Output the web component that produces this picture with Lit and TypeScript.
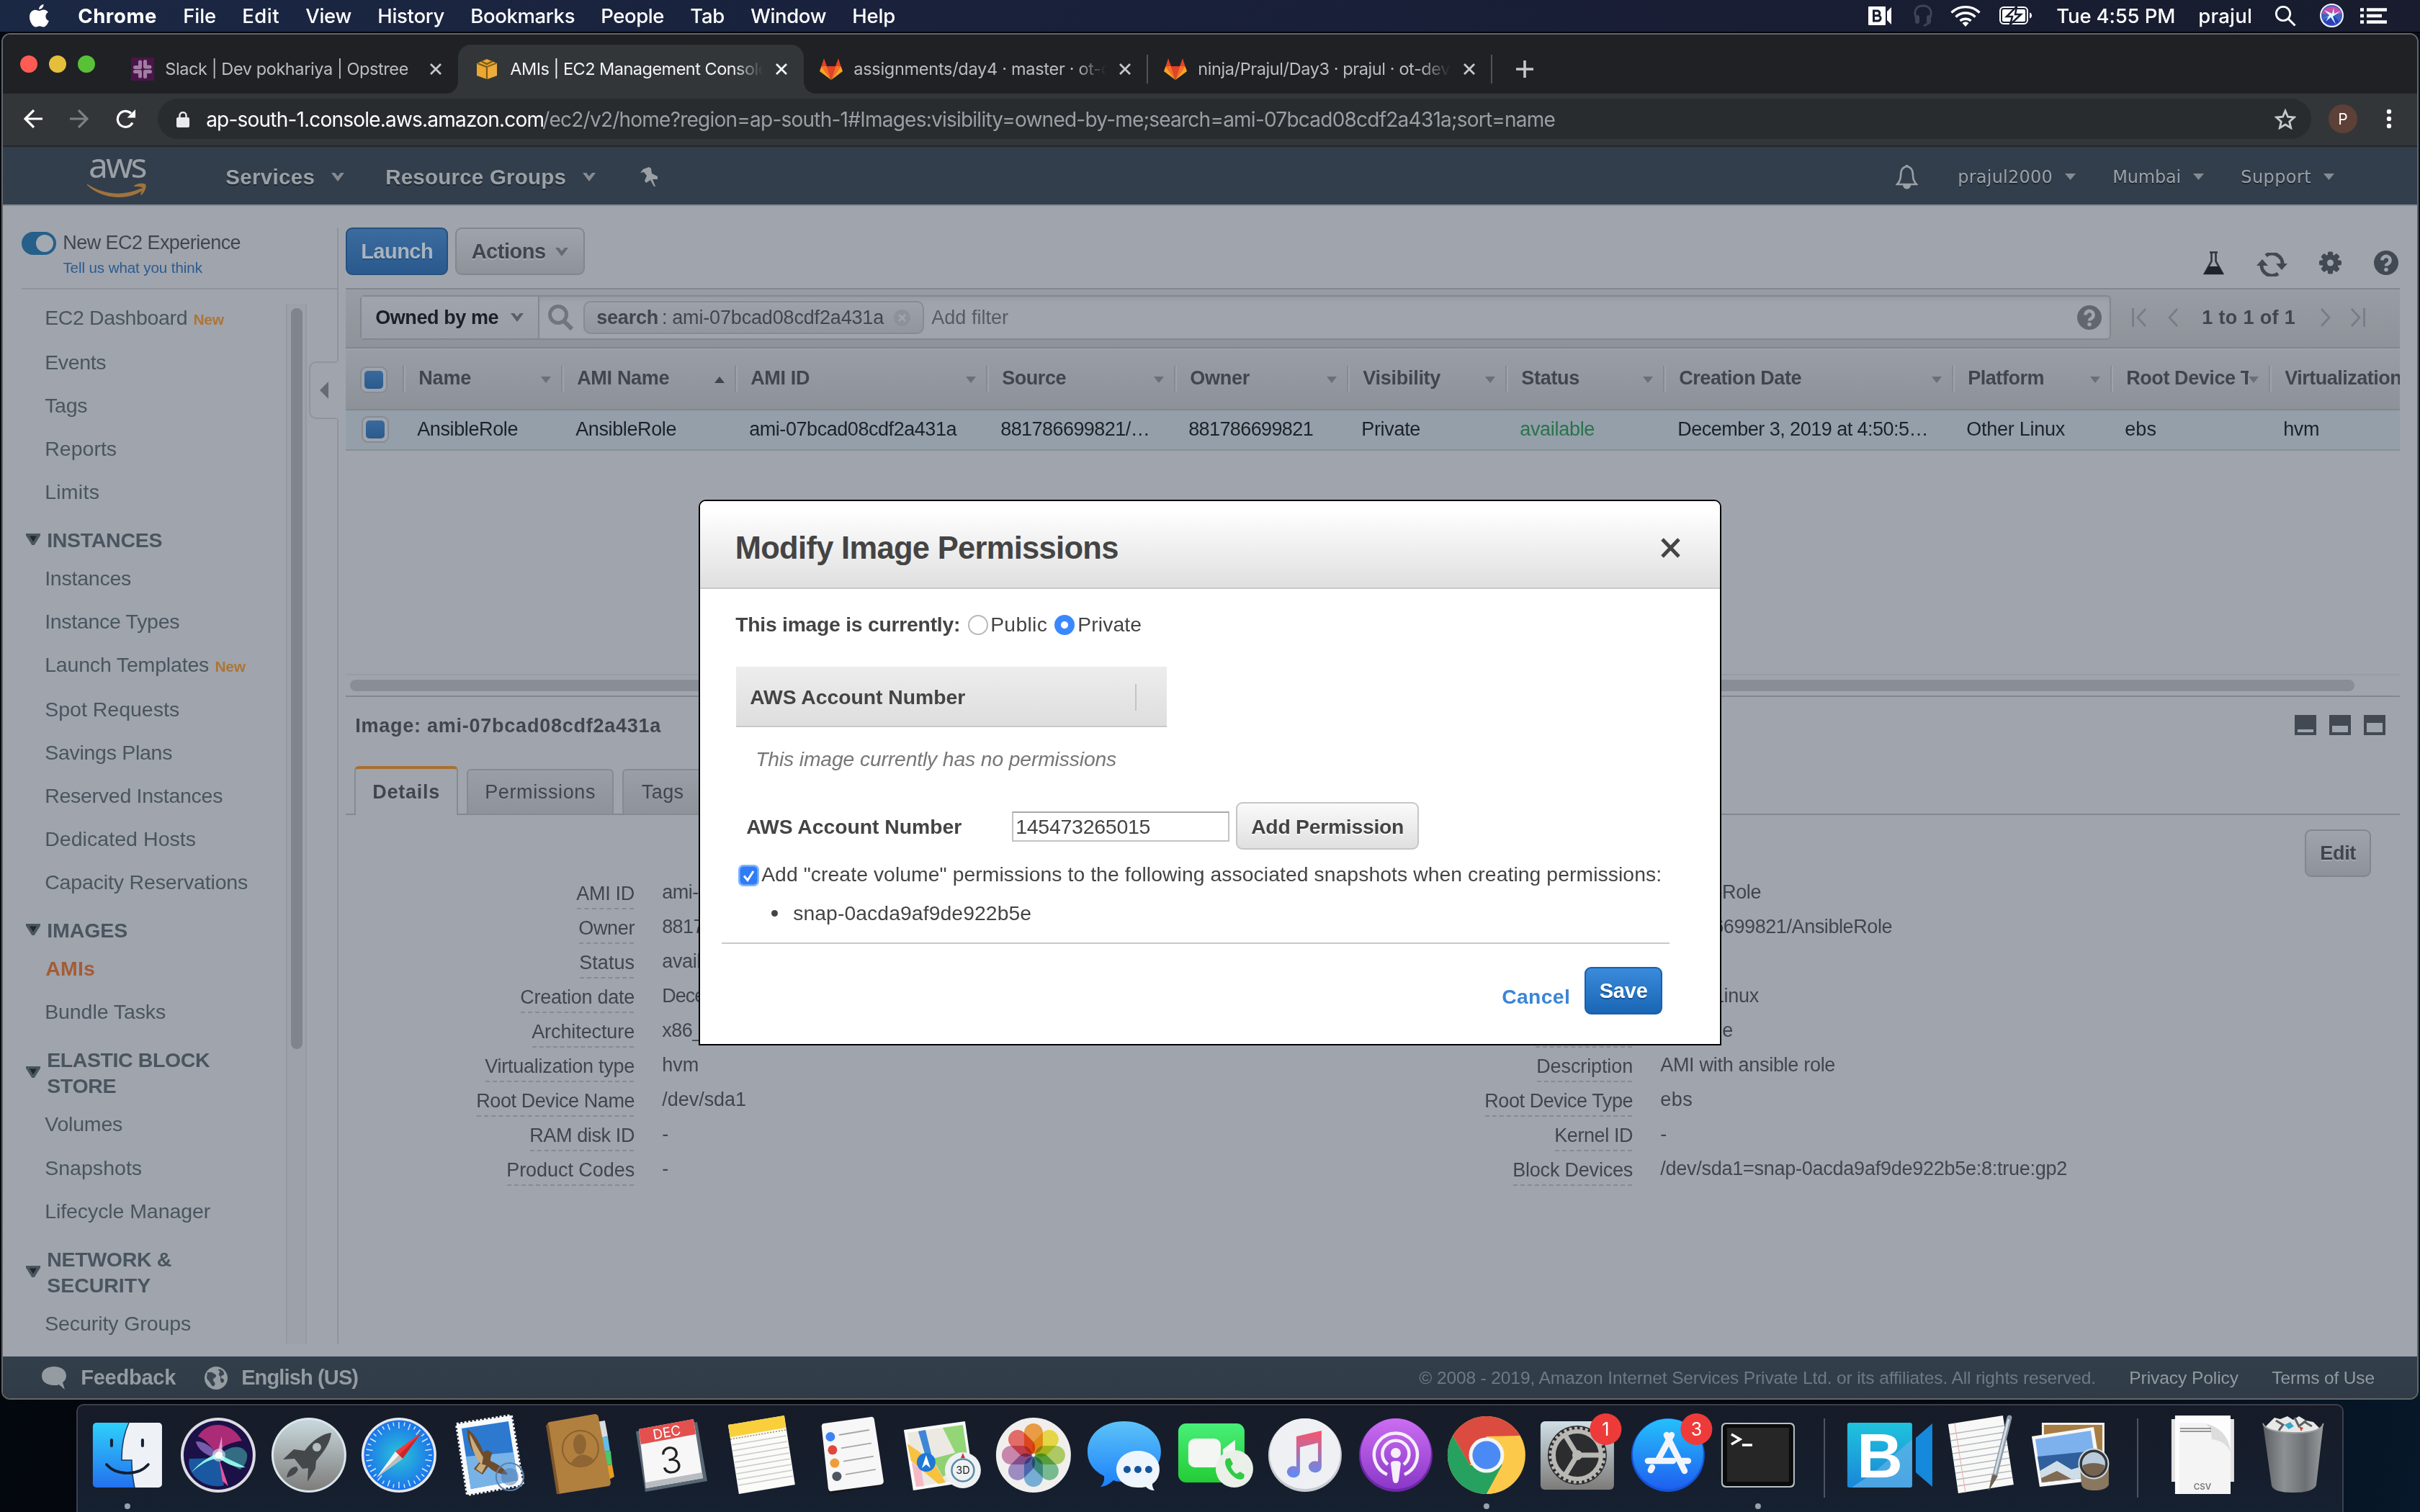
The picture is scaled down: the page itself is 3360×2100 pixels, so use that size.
import { LitElement, html, svg, css, nothing, SVGTemplateResult } from "lit";
import { customElement, property } from "lit/decorators.js";

/** A line of text tracked so that it fills exactly `w` pixels. */
@customElement("fit-text")
class FitText extends LitElement {
  @property() text = "";
  @property({ type: Number }) w = 0;

  static styles = css`
    :host { display: inline-block; white-space: pre; flex: none; }
    .run { display: inline-block; margin-left: -0.03em; }
  `;

  updated() {
    const run = this.renderRoot.querySelector(".run") as HTMLElement;
    const size = parseFloat(getComputedStyle(run).fontSize);
    run.style.letterSpacing = "0px";
    const natural = run.getBoundingClientRect().width;
    run.style.letterSpacing = `${(this.w + size * 0.07 - natural) / this.text.length}px`;
    this.style.width = `${this.w}px`;
  }

  render() {
    return html`<span class="run">${this.text}</span>`;
  }
}

const fit = (text: string, w: number) => html`<fit-text .text=${text} .w=${w}></fit-text>`;

const icon = (cls: string, w: number, h: number, body: SVGTemplateResult) =>
  html`<svg class="ic ${cls}" width=${w} height=${h} viewBox="0 0 ${w} ${h}" fill="none">${body}</svg>`;

const poly = (points: string, fill: string) => svg`<polygon points=${points} fill=${fill} />`;

/* ---------- menu bar ---------- */

const MENUS: [string, number][] = [
  ["File", 44], ["Edit", 50], ["View", 62], ["History", 91], ["Bookmarks", 143],
  ["People", 86], ["Tab", 46], ["Window", 103], ["Help", 58],
];

@customElement("menu-bar")
class MenuBar extends LitElement {
  static styles = css`
    :host { display: block; }
    .bar {
      display: flex; align-items: center; box-sizing: border-box; height: 46px; padding: 0 46px 1px 41px;
      font: 500 27.5px Inter, sans-serif; color: #fff; border-bottom: 2px solid #03060f;
      background: linear-gradient(90deg, #1b2844, #19203a 45%, #181c2e);
    }
    .ic { flex: none; }
    .app { font-weight: 700; margin-left: 41px; }
    .menus { display: flex; gap: 38px; margin-left: 38px; }
    .fill { flex: 1; }
    .head { margin-left: 30px; } .wifi { margin-left: 24px; } .bat { margin-left: 26px; }
    .clock { margin-left: 34px; } .user { margin-left: 34px; } .find { margin-left: 32px; }
    .siri { margin-left: 33px; } .list { margin-left: 23px; }
  `;
  render() {
    return html`<div class="bar">
      ${icon("apple", 27, 32, svg`<path fill="#fff" d="M19.5 0c.3 3.300-2.900 7.200-6.300 7-.4-3.200 2.900-6.700 6.300-7zM13.600 9c1.600 0 3.400-1.500 6-1.500 2.500 0 4.900 1.300 6.200 3.400-5 3-4.300 9.900 1 12.100C25.400 27 22.500 31.500 19.400 31.500c-2 0-2.900-1.300-5.400-1.300s-3.500 1.300-5.400 1.300C4.800 31.500 0 24.300 0 17.700 0 11.500 3.800 7.700 8 7.700c2.400 0 4 1.300 5.600 1.300z"/>`)}
      <span class="app">${fit("Chrome", 108)}</span>
      <div class="menus">${MENUS.map(([t, w]) => fit(t, w))}</div>
      <div class="fill"></div>
      ${icon("bj", 32, 26, svg`<rect width="24" height="26" rx="1" fill="#fff"/><path d="M32 1v24l-6-6V7z" fill="#fff"/><path d="M7.500 6h5a3.300 3.300 0 0 1 0 6.700h-5zm0 6.700h6a3.600 3.600 0 0 1 0 7.300h-6z" stroke="#181c2e" stroke-width="3"/>`)}
      ${icon("head", 28, 32, svg`<path d="M4 18C0 7 7 2 14 2s14 5 10 16" stroke="#3f4358" stroke-width="3"/><rect x="3" y="15" width="6" height="12" rx="3" fill="#3f4358"/><rect x="19" y="15" width="6" height="12" rx="3" fill="#3f4358"/><path d="M22 26l-7 4" stroke="#3f4358" stroke-width="3"/>`)}
      ${icon("wifi", 42, 30, svg`<g stroke="#fff" stroke-width="3.400"><path d="M1.500 10.500a28 28 0 0 1 39 0"/><path d="M7.500 16.500a19.500 19.500 0 0 1 27 0"/><path d="M13.500 22a11.500 11.500 0 0 1 15 0"/></g><path d="M16.500 25a7 7 0 0 1 9 0L21 30z" fill="#fff"/>`)}
      ${icon("bat", 46, 25, svg`<rect x="1" y="1" width="38" height="23" rx="5" stroke="#fff" stroke-width="2"/><rect x="4" y="4" width="32" height="17" rx="2" fill="#fff"/><path d="M24 0L10 14h8l-3 11 15-14h-8z" fill="#fff" stroke="#181c2e" stroke-width="2.500"/><path d="M42 8.500c4 1 4 7 0 8z" fill="#fff"/>`)}
      <span class="clock">${fit("Tue 4:55 PM", 163)}</span>
      <span class="user">${fit("prajul", 73)}</span>
      ${icon("find", 30, 30, svg`<circle cx="12" cy="12" r="9.700" stroke="#fff" stroke-width="2.800"/><path d="M19 19l9.500 9.500" stroke="#fff" stroke-width="3"/>`)}
      ${icon("siri", 33, 33, svg`<circle cx="16.500" cy="16.500" r="15.500" fill="#3b62c4" stroke="#f4f4ff" stroke-width="2"/><path d="M3 14A14 14 0 0 1 30 14L16.500 16z" fill="#c24fa9"/><path d="M5 24A14 14 0 0 0 27 25L17 15z" fill="#2a3fb5"/><path d="M4 21l25-11-11 8 4 11-7-10-7 6 5-9-7-7 11 5 2-8 1 9z" fill="#d7ffff"/>`)}
      ${icon("list", 37, 22, svg`<path d="M0 2.500h5M9 2.500h28M0 11h5M9 11h21M0 19.500h5M9 19.500h28" stroke="#fff" stroke-width="4.400"/>`)}
    </div>`;
  }
}

/* ---------- browser chrome ---------- */

const slackIcon = icon("fav", 32, 32, svg`<rect width="32" height="32" fill="#4a154b"/><g stroke="#a07ea3" stroke-width="5" stroke-linecap="round"><path d="M12.500 6v6M5.500 13.500h7M19.500 5.500v7M20 13h6M5.500 19.500h7M12.500 20v6M19.500 19.500h7M19.500 20v6.500"/></g>`);
const cubeIcon = icon("fav cube", 28, 28, svg`<path d="M0 6L14 0l14 6v17l-14 5-14-5z" fill="#eba72f"/><path d="M6 3l8 4 8-4M1 6l13 5 13-5M14 11v17" stroke="#7a5a17" stroke-width="2.200"/><path d="M15 11l13-5v17l-13 5z" fill="#f0b043" opacity=".5"/>`);
const foxIcon = icon("fav", 32, 30, svg`
  ${poly("6,0 10,11 2.500,11", "#e24329")}${poly("26,0 29.500,11 22,11", "#e24329")}
  ${poly("10,11 22,11 16,30", "#e24329")}${poly("2.500,11 10,11 16,30", "#fc6d26")}${poly("29.500,11 22,11 16,30", "#fc6d26")}
  ${poly("2.500,11 0,18 16,30", "#fca326")}${poly("29.500,11 32,18 16,30", "#fca326")}`);

const cross = (color: string) => icon("x", 16, 16, svg`<path d="M1 1l14 14M15 1L1 15" stroke=${color} stroke-width="2.800"/>`);

@customElement("browser-chrome")
class BrowserChrome extends LitElement {
  static styles = css`
    :host { display: block; font-family: Inter, sans-serif; }
    .ic { flex: none; display: block; }
    .strip { display: flex; box-sizing: border-box; height: 82px; padding-top: 14px; background: #202124; }
    .lights { display: flex; box-sizing: border-box; gap: 16px; padding: 15px 0 0 24px; width: 148px; }
    .light { width: 24px; height: 24px; border-radius: 50%; }
    .red { background: #ff5b54; } .yellow { background: #e5be3b; } .green { background: #58c138; }
    .tab { display: flex; align-items: center; box-sizing: border-box; height: 68px; font-size: 23.500px; color: #babdc1; }
    .first { width: 484px; padding-left: 30px; }
    .active { width: 480px; padding-left: 26px; background: #323639; border-radius: 18px 18px 0 0; color: #f1f3f4; position: relative; }
    .active::before, .active::after { content: ""; position: absolute; bottom: 0; width: 16px; height: 16px; }
    .active::before { left: -16px; background: radial-gradient(circle at 0 0, transparent 15.500px, #323639 16px); }
    .active::after { right: -16px; background: radial-gradient(circle at 100% 0, transparent 15.500px, #323639 16px); }
    .third, .fourth { width: 478px; padding-left: 22px; }
    .title { margin-left: 16px; overflow: hidden; white-space: nowrap; height: 32px; line-height: 32px; }
    .active .title { margin-left: 19px; }
    .faded { width: 350px; -webkit-mask-image: linear-gradient(90deg, #000 88%, transparent 100%); mask-image: linear-gradient(90deg, #000 88%, transparent 100%); }
    .x { margin-left: 18px; }
    .first .x { margin-left: 31px; }
    .rule { width: 2px; height: 40px; background: #515356; margin-left: auto; }
    .plus { margin: 21px 0 0 32px; }
    .toolbar { display: flex; align-items: center; box-sizing: border-box; height: 74px; padding: 0 0 2px 29px; background: #323639; border-bottom: 2px solid #232729; }
    .fwd { margin-left: 38px; } .reload { margin-left: 38px; }
    .omni { display: flex; align-items: center; box-sizing: border-box; width: 2990px; height: 56px; margin-left: 30px; padding: 1px 21px 0 26px; border-radius: 28px; background: #282c2f; font-size: 28px; color: #9aa0a6; }
    .host { margin-left: 24px; color: #fff; }
    .star { margin-left: auto; }
    .avatar { display: grid; place-items: center; width: 40px; height: 40px; border-radius: 50%; margin-left: 24px; background: #5d4037; color: #fff; font-size: 21px; }
    .dots { margin-left: 40px; }
  `;
  render() {
    return html`
      <div class="strip">
        <div class="lights"><i class="light red"></i><i class="light yellow"></i><i class="light green"></i></div>
        <div class="tab first">${slackIcon}<div class="title">${fit("Slack | Dev pokhariya | Opstree", 336)}</div>${cross("#c6c9cc")}</div>
        <div class="tab active">${cubeIcon}<div class="title faded">${fit("AMIs | EC2 Management Console", 356)}</div>${cross("#f1f3f4")}</div>
        <div class="tab third">${foxIcon}<div class="title faded">${fit("assignments/day4 · master · ot-d", 356)}</div>${cross("#c6c9cc")}<i class="rule"></i></div>
        <div class="tab fourth">${foxIcon}<div class="title faded">${fit("ninja/Prajul/Day3 · prajul · ot-dev", 348)}</div>${cross("#c6c9cc")}<i class="rule"></i></div>
        ${icon("plus", 26, 26, svg`<path d="M13 1v24M1 13h24" stroke="#c6c9cc" stroke-width="3.600"/>`)}
      </div>
      <div class="toolbar">
        ${icon("back", 26, 26, svg`<path d="M26 13H2M14 1L2 13l12 12" stroke="#fff" stroke-width="3.200"/>`)}
        ${icon("fwd", 26, 26, svg`<path d="M0 13h24M12 1l12 12-12 12" stroke="#7c8083" stroke-width="3.200"/>`)}
        ${icon("reload", 28, 26, svg`<path d="M23 18.500A11 11 0 1 1 21 5.500" stroke="#fff" stroke-width="3.200"/><path d="M27 0v11.500H15.500z" fill="#fff"/>`)}
        <div class="omni">
          ${icon("lock", 18, 22, svg`<rect y="8" width="18" height="14" rx="2" fill="#e8eaed"/><path d="M4.500 9V5.500a4.500 4.500 0 0 1 9 0V9" stroke="#e8eaed" stroke-width="2.400"/>`)}
          <span class="host">${fit("ap-south-1.console.aws.amazon.com", 467)}</span>
          ${fit("/ec2/v2/home?region=ap-south-1#Images:visibility=owned-by-me;search=ami-07bcad08cdf2a431a;sort=name", 1404)}
          ${icon("star", 30, 29, svg`<path d="M15 3l3.500 8.200 8.900.8-6.700 5.900 2 8.700L15 22l-7.700 4.600 2-8.700L2.600 12l8.900-.8z" stroke="#c6c9cc" stroke-width="2.800"/>`)}
        </div>
        <div class="avatar">P</div>
        ${icon("dots", 8, 28, svg`<circle cx="4" cy="4" r="3.200" fill="#fff"/><circle cx="4" cy="14" r="3.200" fill="#fff"/><circle cx="4" cy="24" r="3.200" fill="#fff"/>`)}
      </div>`;
  }
}

/* ---------- AWS console ---------- */

const GRAY = "#868b91";
const vee = (cls: string, color = GRAY) => icon(cls, 18, 12, poly("0,0 5,0 9,5 13,0 18,0 9,12", color));
const caret = (cls: string) => icon(cls, 15, 9, poly("0,0 15,0 7.500,9", "#868b91"));
const help = (cls: string, color: string) => icon(cls, 34, 34, svg`<circle cx="17" cy="17" r="17" fill=${color}/><path d="M11.500 13.500a5.500 5.500 0 1 1 8.500 4.500c-2.200 1.300-3 2-3 3.500" stroke="#a0a4ac" stroke-width="4.600"/><circle cx="17" cy="26.500" r="2.800" fill="#a0a4ac"/>`);

type NavItem = { text: string; w: number; isNew?: boolean; current?: boolean };
type NavGroup = { title: [string, number][]; items: NavItem[] };

const TOP: NavItem[] = [
  { text: "EC2 Dashboard", w: 196, isNew: true }, { text: "Events", w: 83 }, { text: "Tags", w: 57 },
  { text: "Reports", w: 98 }, { text: "Limits", w: 74 },
];
const GROUPS: NavGroup[] = [
  { title: [["INSTANCES", 158]], items: [
    { text: "Instances", w: 118 }, { text: "Instance Types", w: 185 }, { text: "Launch Templates", w: 226, isNew: true },
    { text: "Spot Requests", w: 185 }, { text: "Savings Plans", w: 175 }, { text: "Reserved Instances", w: 245 },
    { text: "Dedicated Hosts", w: 208 }, { text: "Capacity Reservations", w: 280 }] },
  { title: [["IMAGES", 110]], items: [{ text: "AMIs", w: 67, current: true }, { text: "Bundle Tasks", w: 166 }] },
  { title: [["ELASTIC BLOCK", 224], ["STORE", 94]], items: [
    { text: "Volumes", w: 106 }, { text: "Snapshots", w: 133 }, { text: "Lifecycle Manager", w: 228 }] },
  { title: [["NETWORK &", 171], ["SECURITY", 142]], items: [{ text: "Security Groups", w: 201 }] },
];

type Col = { head: string; hw: number; cell: string; cw: number; up?: boolean; ok?: boolean; last?: boolean };
const COLS: Col[] = [
  { head: "Name", hw: 71, cell: "AnsibleRole", cw: 138 },
  { head: "AMI Name", hw: 126, cell: "AnsibleRole", cw: 138, up: true },
  { head: "AMI ID", hw: 80, cell: "ami-07bcad08cdf2a431a", cw: 286 },
  { head: "Source", hw: 87, cell: "881786699821/…", cw: 205 },
  { head: "Owner", hw: 81, cell: "881786699821", cw: 171 },
  { head: "Visibility", hw: 106, cell: "Private", cw: 80 },
  { head: "Status", hw: 79, cell: "available", cw: 102, ok: true },
  { head: "Creation Date", hw: 168, cell: "December 3, 2019 at 4:50:5…", cw: 346 },
  { head: "Platform", hw: 104, cell: "Other Linux", cw: 135 },
  { head: "Root Device Type", hw: 216, cell: "ebs", cw: 42 },
  { head: "Virtualization Type", hw: 226, cell: "hvm", cw: 48, last: true },
];

type Pair = [string, number, string, number];
const LEFT: Pair[] = [
  ["AMI ID", 79, "ami-07bcad08cdf2a431a", 286], ["Owner", 76, "881786699821", 171], ["Status", 75, "available", 102],
  ["Creation date", 157, "December 3, 2019", 205], ["Architecture", 141, "x86_64", 84], ["Virtualization type", 206, "hvm", 49],
  ["Root Device Name", 218, "/dev/sda1", 115], ["RAM disk ID", 144, "-", 9], ["Product Codes", 176, "-", 9],
];
const RIGHT: Pair[] = [
  ["AMI Name", 116, "AnsibleRole", 138], ["Source", 83, "881786699821/AnsibleRole", 320], ["State Reason", 150, "-", 9],
  ["Platform", 97, "Other Linux", 135], ["Image Type", 134, "machine", 99], ["Description", 132, "AMI with ansible role", 241],
  ["Root Device Type", 204, "ebs", 43], ["Kernel ID", 107, "-", 9], ["Block Devices", 165, "/dev/sda1=snap-0acda9af9de922b5e:8:true:gp2", 563],
];

@customElement("aws-console")
class AwsConsole extends LitElement {
  static styles = css`
    :host { display: block; font: 27px "Liberation Sans", sans-serif; color: #40464f; }
    .ic { flex: none; display: block; }
    .nav { display: flex; align-items: center; box-sizing: border-box; height: 80px; padding: 3px 115px 0 117px; background: #323e4c; color: #9aa0a5; }
    .logo { display: flex; flex-direction: column; align-items: center; width: 82px; height: 68px; margin-right: 111px; font: 48px/34px "Noto Sans", sans-serif; }
    .smile { margin-top: 8px; }
    .strong { font: bold 29.500px/40px "Liberation Sans", sans-serif; text-shadow: 0 2px #1d252f; }
    .plain { font: 24px/40px "DejaVu Sans", sans-serif; text-shadow: 0 2px #1d252f; }
    .v1 { margin: 0 58px 0 24px; } .v2 { margin: 0 62px 0 24px; }
    .fill { flex: 1; }
    .bell { margin-right: 56px; }
    .c1 { margin: 0 52px 0 18px; } .c2 { margin: 0 52px 0 18px; } .c3 { margin-left: 18px; }

    .page { display: flex; box-sizing: border-box; height: 1600px; padding-top: 30px; border-top: 2px solid #848b93; background: #a0a4ac; }
    .side { width: 464px; height: 1550px; overflow: hidden; }
    .promo { display: flex; gap: 10px; box-sizing: border-box; height: 86px; margin-left: 26px; padding-top: 6px; border-bottom: 2px solid #8f949c; }
    .toggle { display: flex; justify-content: flex-end; box-sizing: border-box; width: 48px; height: 32px; padding: 4px 4px 0 0; border-radius: 16px; background: #255f8a; }
    .knob { width: 24px; height: 24px; border-radius: 50%; background: #a3a9b1; }
    .words { display: flex; flex-direction: column; line-height: 30px; }
    .tell { font-size: 20.500px; line-height: 40px; color: #2a5b92; }
    .cols { display: flex; height: 1464px; }
    .menu { width: 393px; height: 1464px; overflow: hidden; color: #49555f; font-size: 28.500px; }
    .menu-in { padding: 9px 0 0 59px; }
    .item { display: flex; height: 60.100px; line-height: 60px; }
    .item.tall { height: 61.600px; }
    .current { color: #a35c36; font-weight: bold; padding-left: 1px; }
    .new { margin: 3px 0 0 10px; font-size: 21px; font-weight: bold; color: #ad7538; }
    .group { display: flex; align-items: center; gap: 10px; margin: 19px 0 5px -27px; font-weight: bold; line-height: 36px; }
    .names { display: flex; flex-direction: column; }
    .tri { margin-bottom: 2px; }
    .track { box-sizing: border-box; width: 29px; height: 1444px; margin-top: 20px; padding: 6px 0 0 5px; border: solid #959aa2; border-width: 0 2px; background: #9da1a9; }
    .thumb { width: 16px; height: 1029px; border-radius: 8px; background: #7f848d; }
    .handle { display: grid; place-items: center; box-sizing: border-box; width: 39px; height: 80px; margin: 100px 0 0 3px; border: 2px solid #90959d; border-right: 0; border-radius: 10px 0 0 10px; }
    .spine { display: flex; flex-direction: column; justify-content: space-between; width: 2px; height: 1550px; }
    .spine i { background: #8f949c; } .s1 { height: 186px; } .s2 { height: 1284px; }

    .main { width: 2852px; margin-left: 10px; }
    .actions { display: flex; height: 84px; }
    .btn { display: flex; align-items: center; justify-content: center; box-sizing: border-box; height: 66px; border: 2px solid #82878f; border-radius: 9px; background: linear-gradient(#9fa3ab, #8e9299); font-weight: bold; color: #40464f; text-shadow: 0 2px #a7abb2; }
    .launch { width: 142px; padding-top: 1px; border-color: #23507f; background: linear-gradient(#3c6c9f, #2a5a8d); color: #a9b3bf; text-shadow: 0 2px #24507f; font-size: 29px; }
    .act { width: 180px; margin-left: 10px; padding-top: 1px; gap: 14px; font-size: 29px; }
    .tools { display: flex; align-items: center; height: 34px; margin: 32px 2px 0 auto; }
    .t2 { margin: 4px 44px 0 44px; } .t4 { margin-left: 45px; }
    .filters { display: flex; align-items: center; box-sizing: border-box; height: 86px; padding: 8px 47px 12px 20px; border-top: 2px solid #838890; border-bottom: 2px solid #9da1a9; background: linear-gradient(#989ca4, #8e9299); box-shadow: inset 0 -2px #82878e; }
    .query { display: flex; align-items: center; box-sizing: border-box; width: 2431px; height: 62px; border: 2px solid #838890; border-radius: 6px; background: #a0a4ac; box-shadow: inset 0 4px 5px #979ba3; }
    .owned { display: flex; align-items: center; box-sizing: border-box; gap: 18px; width: 247px; height: 58px; padding: 0 0 0 20px; border-right: 2px solid #838890; background: linear-gradient(#a0a4ac, #999da5); font-weight: bold; color: #1b2028; }
    .lens { margin: 0 14px 0 12px; }
    .token { display: flex; align-items: center; box-sizing: border-box; width: 473px; height: 46px; padding-left: 17px; border: 2px solid #878c94; border-radius: 10px; background: linear-gradient(#9da1a9, #92969e); }
    .tk { width: 8px; margin: 0 7px 0 6px; }
    .tx { margin-left: 15px; }
    .add { margin-left: 11px; color: #565b64; }
    .qh { margin: 0 11px 0 auto; }
    .p1 { margin-left: 29px; } .p2 { margin: 0 33px 0 29px; } .p3 { margin: 0 27px 0 35px; }
    .count { font-weight: bold; }
    .grid { display: grid; grid-template-columns: 79px 220px 241px 349px 261px 240px 220px 219px 401px 220px 220px 182px; }
    .thead { height: 82px; border-bottom: 2px solid #838890; background: linear-gradient(#999da5, #8d9198); font-weight: bold; color: #40464f; }
    .th { display: flex; align-items: center; height: 36px; margin-top: 22px; box-sizing: border-box; border-left: 2px solid #868a92; box-shadow: inset 2px 0 #9fa3ab; overflow: hidden; }
    .lab { box-sizing: border-box; margin-left: 21px; flex: 1; height: 34px; line-height: 33px; overflow: hidden; white-space: nowrap; min-width: 0; }
    .arrow { margin: 2px 14px 0 0; }
    .trow { height: 54px; border-bottom: 2px solid #878e96; background: #949fa9; color: #1c2229; line-height: 53px; }
    .td { padding-left: 21px; }
    .ok { color: #28744a; }
    .cb { box-sizing: border-box; width: 38px; height: 37px; margin: 23px 0 0 20px; padding: 4px; border: 2px solid #878b93; border-radius: 9px; background: #a0a4ac; }
    .trow .cb { margin: 8px 0 0 22px; }
    .dot { width: 26px; height: 25px; border-radius: 5px; background: linear-gradient(#3a6a9d, #2b5a8c); }
    .hs { box-sizing: border-box; height: 32px; margin-top: 310px; padding: 6px; border-top: 2px solid #989ca4; border-bottom: 2px solid #83888f; }
    .hthumb { width: 2783px; height: 16px; border-radius: 8px; background: #898d96; }
    .title { display: flex; align-items: center; gap: 18px; box-sizing: border-box; height: 96px; padding: 0 20px 16px 14px; font-weight: bold; }
    .pn { margin-bottom: 2px; }
    .tabs { display: flex; align-items: flex-end; height: 68px; box-shadow: inset 0 -2px #83888f; padding-left: 12px; }
    .tab { display: grid; place-items: center; box-sizing: border-box; border: 2px solid #868b93; border-radius: 6px 6px 0 0; margin-right: 12px; }
    .on { width: 144px; height: 68px; border-top: 4px solid #a8702f; border-bottom: 0; background: #a0a4ac; font-weight: bold; padding-top: 1px; }
    .off { height: 64px; background: linear-gradient(#9a9ea6, #8e9299); }
    .perm { width: 204px; } .tags { width: 112px; }
    .edit { width: 92px; margin: 20px 40px 0 auto; }
    .facts { display: grid; grid-template-columns: 400px 40px 946px 400px 40px 700px; margin-top: 4px; }
    .k { justify-self: end; height: 39px; margin: 0 0 7px; line-height: 38px; border-bottom: 2px dashed #868b93; }
    .v { line-height: 35px; }

    .foot { display: flex; align-items: center; box-sizing: border-box; height: 58px; padding: 1px 60px 0 54px; border-radius: 0 0 10px 10px; background: linear-gradient(#323f4b, #303b47); font: 24.500px "Liberation Sans", sans-serif; color: #6f7a84; }
    .fb { margin: 0 41px 0 21px; } .en { margin-left: 20px; }
    .big { font-size: 29px; font-weight: bold; color: #949ba1; }
    .link { margin-left: 48px; color: #939aa0; }
  `;

  private item(i: NavItem) {
    return html`<div class="item ${i.isNew ? "tall" : ""} ${i.current ? "current" : ""}">${fit(i.text, i.w)}${i.isNew ? html`<span class="new">${fit("New", 41)}</span>` : nothing}</div>`;
  }

  private facts(p: Pair) {
    return html`<div class="k">${fit(p[0], p[1])}</div><div></div><div class="v">${fit(p[2], p[3])}</div>`;
  }

  private panel(y: number) {
    return icon("pn", 30, 28, svg`<rect width="30" height="28" fill="#424952"/><rect x="4" y=${y} width="22" height=${24 - y} fill="#a0a4ac"/>`);
  }

  render() {
    const check = html`<div class="cb"><div class="dot"></div></div>`;
    return html`
      <div class="nav">
        <div class="logo">${fit("aws", 75)}${icon("smile", 82, 20, svg`<path d="M0 1.500C22 16 48 19 74 8c2-1 4 1 2 3C56 25 20 23 0 3z" fill="#a0733d"/><path d="M65 4c5-4 13-4 16-2 2 3-1 11-6 15l-1-1c2-5 3-9 2-10-2-1-6-1-11-1z" fill="#a0733d"/>`)}</div>
        <span class="strong">${fit("Services", 122)}</span>${vee("v1")}
        <span class="strong">${fit("Resource Groups", 249)}</span>${vee("v2")}
        ${icon("pin", 26, 27, svg`<path d="M4 3l8-3 3 2 1 7 8 4v4h-7l4 10h-2l-5-9-6 4-2-3 3-7-4-5-5 1z" fill="#9aa0a5"/>`)}
        <div class="fill"></div>
        ${icon("bell", 31, 34, svg`<path d="M15.500 2c-7 1-8.500 7-8.500 13 0 6-2 9-5 12h27c-3-3-5-6-5-12 0-6-1.500-12-8.500-13z" stroke="#9aa0a5" stroke-width="2.600"/><path d="M10 28h11a5.500 5.500 0 0 1-11 0z" fill="#9aa0a5"/><path d="M15.500 0v3" stroke="#9aa0a5" stroke-width="3"/>`)}
        <span class="plain">${fit("prajul2000", 130)}</span>${caret("c1")}
        <span class="plain">${fit("Mumbai", 93)}</span>${caret("c2")}
        <span class="plain">${fit("Support", 96)}</span>${caret("c3")}
      </div>

      <div class="page">
        <div class="side">
          <div class="promo">
            <div class="toggle"><div class="knob"></div></div>
            <div class="words">${fit("New EC2 Experience", 245)}<span class="tell">${fit("Tell us what you think", 192)}</span></div>
          </div>
          <div class="cols">
            <div class="menu"><div class="menu-in">
              ${TOP.map((i) => this.item(i))}
              ${GROUPS.map((g) => html`
                <div class="group">${icon("tri", 20, 16, svg`<path d="M1.500 1.500h17L10 15z" fill="#1f262e" stroke="#49555f" stroke-width="4" stroke-linejoin="round"/>`)}
                  <div class="names">${g.title.map(([t, w]) => fit(t, w))}</div></div>
                ${g.items.map((i) => this.item(i))}`)}
            </div></div>
            <div class="track"><div class="thumb"></div></div>
            <div class="handle">${icon("h", 12, 24, poly("12,0 12,24 0,12", "#666b73"))}</div>
          </div>
        </div>
        <div class="spine"><i class="s1"></i><i class="s2"></i></div>

        <div class="main">
          <div class="actions">
            <div class="btn launch">${fit("Launch", 98)}</div>
            <div class="btn act">${fit("Actions", 101)}${vee("v", "#656a73")}</div>
            <div class="tools">
              ${icon("t1", 31, 33, svg`<path d="M10 1.500h11M12.500 1v13L3 31h25L18.500 14V1" stroke="#31363f" stroke-width="2.600"/><path d="M8 21h15l6 11H2z" fill="#1e232c"/>`)}
              ${icon("t2", 43, 33, svg`<path d="M7 16a14.500 14.500 0 0 0 23 13M36 17A14.500 14.500 0 0 0 13 4" stroke="#424952" stroke-width="5"/><path d="M0 18L8 9l8 9zM27 15h16l-8 9z" fill="#424952"/>`)}
              ${icon("t3", 31, 33, svg`<g transform="translate(15.500 16)">${[0, 45, 90, 135].map((a) => svg`<rect x="-3.600" y="-15.500" width="7.200" height="31" rx="2" fill="#424952" transform="rotate(${a})"/>`)}<circle r="11.500" fill="#424952"/><circle r="4.500" fill="#a0a4ac"/></g>`)}
              ${help("t4", "#424952")}
            </div>
          </div>

          <div class="filters">
            <div class="query">
              <div class="owned">${fit("Owned by me", 169)}${vee("v", "#5a5f68")}</div>
              ${icon("lens", 35, 36, svg`<circle cx="14" cy="14" r="11.500" stroke="#70757e" stroke-width="5"/><path d="M22 23l11 11" stroke="#70757e" stroke-width="6"/>`)}
              <div class="token"><b>${fit("search", 84)}</b><span class="tk">:</span>${fit("ami-07bcad08cdf2a431a", 292)}
                ${icon("tx", 23, 23, svg`<circle cx="11.500" cy="11.500" r="11.500" fill="#8d9199"/><path d="M7 7l9 9M16 7l-9 9" stroke="#a0a4ac" stroke-width="3"/>`)}</div>
              <span class="add">${fit("Add filter", 105)}</span>
              ${help("qh", "#62676f")}
            </div>
            ${icon("p1", 20, 26, svg`<path d="M1.500 0v26M19 1L8 13l11 12" stroke="#777c84" stroke-width="2.600"/>`)}
            ${icon("p2", 16, 26, svg`<path d="M14 1L3 13l11 12" stroke="#777c84" stroke-width="2.600"/>`)}
            <span class="count">${fit("1 to 1 of 1", 128)}</span>
            ${icon("p3", 16, 26, svg`<path d="M2 1l11 12L2 25" stroke="#777c84" stroke-width="2.600"/>`)}
            ${icon("p4", 20, 26, svg`<path d="M18.500 0v26M1 1l11 12L1 25" stroke="#777c84" stroke-width="2.600"/>`)}
          </div>

          <div class="grid thead">${check}
            ${COLS.map((c) => html`<div class="th"><div class="lab">${fit(c.head, c.hw)}</div>
              ${c.last ? nothing : icon("arrow", 14, 9, poly(c.up ? "0,9 14,9 7,0" : "0,0 14,0 7,9", c.up ? "#40464f" : "#6b7078"))}</div>`)}
          </div>
          <div class="grid trow">${check}${COLS.map((c) => html`<div class="td ${c.ok ? "ok" : ""}">${fit(c.cell, c.cw)}</div>`)}</div>
          <div class="hs"><div class="hthumb"></div></div>

          <div class="title">${fit("Image: ami-07bcad08cdf2a431a", 423)}<div class="fill"></div>${this.panel(20)}${this.panel(15)}${this.panel(11)}</div>
          <div class="tabs">
            <div class="tab on">${fit("Details", 92)}</div>
            <div class="tab off perm">${fit("Permissions", 152)}</div>
            <div class="tab off tags">${fit("Tags", 57)}</div>
          </div>
          <div class="btn edit">${fit("Edit", 48)}</div>
          <div class="facts">${LEFT.map((l, i) => html`${this.facts(l)}${this.facts(RIGHT[i])}`)}</div>
        </div>
      </div>

      <div class="foot">
        ${icon("f1", 34, 34, svg`<path d="M17 1C7 1 0 6 0 14s7 13 17 13c3 0 5 0 7-1l8 7-3-10c3-2 5-5 5-9 0-8-7-13-17-13z" fill="#949ba1"/>`)}
        <span class="big fb">${fit("Feedback", 130)}</span>
        ${icon("f2", 32, 32, svg`<circle cx="16" cy="16" r="16" fill="#949ba1"/><path d="M4 8c3 0 6-1 8 1s4 1 4 4-5 3-4 6 4 4 2 7-4 1-6-3-5-5-5-8zM19 4c3-1 7 1 8 5s-3 2-4 5 5 2 4 6-5 3-5-1 1-4-1-6-1-3 0-5-3-3-2-4z" fill="#3a4753"/>`)}
        <span class="big en">${fit("English (US)", 160)}</span>
        <div class="fill"></div>
        ${fit("© 2008 - 2019, Amazon Internet Services Private Ltd. or its affiliates. All rights reserved.", 938)}
        <span class="link">${fit("Privacy Policy", 150)}</span>
        <span class="link">${fit("Terms of Use", 141)}</span>
      </div>`;
  }
}

/* ---------- dialog ---------- */

@customElement("permissions-dialog")
class PermissionsDialog extends LitElement {
  static styles = css`
    :host { display: block; }
    .box { box-sizing: border-box; width: 1420px; height: 758px; border: 2px solid #000; border-radius: 10px 10px 0 0; background: #fff; font: 28.300px "Liberation Sans", sans-serif; color: #444; overflow: hidden; }
    .head { display: flex; align-items: center; justify-content: space-between; box-sizing: border-box; height: 122px; padding: 10px 55px 0 50px; border-bottom: 2px solid #c9c9c9; background: linear-gradient(#fff 10%, #dfdfdf); font-size: 43.500px; font-weight: bold; }
    .body { padding: 33px 0 0 50px; }
    .vis { display: flex; align-items: center; height: 32px; }
    b { font-weight: bold; }
    .r { box-sizing: border-box; width: 28px; height: 28px; border-radius: 50%; margin: 2px 4px 0 12px; border: 2px solid #b9b9b9; background: #fff; }
    .r.on { border: 0; margin: 2px 5px 0 11px; background: radial-gradient(circle, #fff 4.500px, #3b88fd 5.500px); }
    .th { display: flex; align-items: center; box-sizing: border-box; width: 598px; height: 84px; margin-top: 43px; padding: 3px 42px 0 20px; border-bottom: 2px solid #c9c9c9; background: linear-gradient(#ededed, #dedede); }
    .bar { width: 2px; height: 37px; margin: 0 0 0 auto; background: #c4c4c4; }
    .none { margin: 24px 0 0 28px; line-height: 40px; font-style: italic; color: #777; }
    .add { display: flex; align-items: center; box-sizing: border-box; height: 68px; padding-top: 2px; margin: 39px 0 -1px 15px; }
    .in { box-sizing: border-box; width: 302px; height: 42px; margin: 0 9px 0 71px; padding-left: 4px; border: 2px solid #c3c3c3; border-top-color: #a9a9a9; font-size: 28.500px; line-height: 38px; }
    .btn { display: grid; place-items: center; box-sizing: border-box; height: 66px; border: 2px solid #c6c6c6; border-radius: 9px; font-weight: bold; }
    .perm { width: 254px; margin-top: -2px; padding-top: 3px; background: linear-gradient(#fafafa, #e0e0e0); text-shadow: 0 2px #fff; }
    .snap { display: flex; align-items: center; height: 34px; margin: 17px 0 0 3px; }
    .cb { display: block; margin-right: 4px; margin-top: 3px; }
    .li { display: flex; align-items: center; height: 36px; gap: 22px; margin: 19px 0 0 49px; }
    .li i { width: 9px; height: 9px; border-radius: 50%; background: #444; }
    .rule { width: 1316px; height: 2px; margin: 23px 0 0 -20px; background: #c9c9c9; }
    .foot { display: flex; gap: 21px; margin: 32px 80px 0 0; justify-content: flex-end; }
    .cancel { margin-top: 22px; line-height: 38px; font-weight: bold; color: #3b85d6; }
    .save { width: 108px; padding-top: 1px; border-color: #1a5fab; background: linear-gradient(#3a8adb, #1a66b5); color: #fff; text-shadow: 0 2px #16508f; font-size: 29px; }
  `;
  render() {
    return html`<div class="box">
      <div class="head">${fit("Modify Image Permissions", 529)}${icon("x", 27, 28, svg`<path d="M2 2l23 24M25 2L2 26" stroke="#444" stroke-width="5"/>`)}</div>
      <div class="body">
        <div class="vis"><b>${fit("This image is currently:", 310)}</b><i class="r"></i>${fit("Public", 77)}<i class="r on"></i>${fit("Private", 87)}</div>
        <div class="th"><b>${fit("AWS Account Number", 297)}</b><i class="bar"></i></div>
        <div class="none">${fit("This image currently has no permissions", 499)}</div>
        <div class="add"><b>${fit("AWS Account Number", 297)}</b><div class="in">${fit("145473265015", 185)}</div><div class="btn perm">${fit("Add Permission", 210)}</div></div>
        <div class="snap">${icon("cb", 29, 30, svg`<rect width="29" height="30" rx="7" fill="#84b4fb"/><rect x="2.500" y="2.500" width="24" height="25" rx="5" fill="#2f7df6"/><path d="M8 15.500l5 6L21 9" stroke="#fff" stroke-width="3"/>`)}${fit('Add "create volume" permissions to the following associated snapshots when creating permissions:', 1248)}</div>
        <div class="li"><i></i>${fit("snap-0acda9af9de922b5e", 329)}</div>
        <div class="rule"></div>
        <div class="foot"><span class="cancel">${fit("Cancel", 93)}</span><div class="btn save">${fit("Save", 65)}</div></div>
      </div>
    </div>`;
  }
}

/* ---------- dock ---------- */

const badge = (n: string) => svg`<circle cx="39.500" cy="-36" r="22" fill="#ee3b3a"/><text x="39.500" y="-27" font-size="25" text-anchor="middle" fill="#fff">${n}</text>`;
const range = (n: number) => Array.from({ length: n }, (_, i) => i);

const finder = svg`<rect x="-48" y="-45" width="96" height="90" rx="5" fill="url(#finder)"/><path d="M2-45h41a5 5 0 0 1 5 5v80a5 5 0 0 1-5 5H10C7 30 6 20 6 7H-8C-8-10-5-30 2-45z" fill="#eef1f6"/>
  <path d="M2-45C-5-30-8-10-8 7H6c0 13 1 23 4 38" fill="none" stroke="#10395f" stroke-width="1.500"/><path d="M-22-21v8M21-21v8" stroke="#12202f" stroke-width="4" stroke-linecap="round"/><path d="M-29 13C-15 29 15 29 29 13" fill="none" stroke="#12202f" stroke-width="3.600" stroke-linecap="round"/>`;
const siri = svg`<circle r="52" fill="#dcdce2"/><circle r="48" fill="#1b1147"/><path d="M-28-26C-14-50 20-46 33-20 20-18 5-14-2-2-14-18-22-24-28-26z" fill="#c5307f" opacity=".85"/><path d="M-40 5C-45 30-15 48 8 42L2 4z" fill="#1a6bb8" opacity=".8"/><path d="M0 2C14-14 34-16 40-2 42 10 32 20 30 20z" fill="#3b8c98" opacity=".75"/><path d="M0 0C-10-14-22-20-31-19-28-6-14 2 0 4z" fill="#9d7ad6" opacity=".7"/>
  <path d="M-37 24C-26 10-12 2 0-3 8 4 26 10 38 17 24 18 12 12 2 5-10 4-24 12-37 24z" fill="#8ef3e6"/><path d="M-2 2L5-26 6 0z" fill="#e6b4ea" opacity=".8"/><path d="M1 4L14 43 6 36z" fill="#e8559f"/><circle cx="1" cy="0" r="9" fill="#eafffb" opacity=".55"/><circle cx="1" cy="0" r="5" fill="#fff"/>`;
const rocket = svg`<circle r="52" fill="#d9e6ea"/><circle r="49" fill="url(#launch)"/><path d="M31-31C20-30 6-22-6-6L-21-8-36 6-20 5-9 19-1 18-2 37 9 19 10 8C22-6 30-18 31-31z" fill="#44484b"/><path d="M-17 16c-6 0-12 4-14 15 9-2 14-6 16-11z" fill="#44484b"/><circle cx="11" cy="-11" r="6" fill="#b4bdc0"/>`;
const safari = svg`<circle r="52" fill="#e6e8ec"/><circle r="48.500" fill="url(#safari)"/>${range(36).map((i) => svg`<path d="M0-46v${i % 2 ? 5 : 9}" stroke="#cfe9ff" stroke-width="1.500" transform="rotate(${i * 10})"/>`)}${poly("31,-31 5,5 -5,-5", "#f03a3a")}${poly("31,-31 5,5 0,0", "#c9262b")}${poly("-31,31 5,5 -5,-5", "#f3f4f5")}${poly("-31,31 5,5 0,0", "#b9bcc0")}`;
const mail = svg`<path d="M-46-43L30-55 46 41-31 55z" fill="#f7f9fb" stroke="#f7f9fb" stroke-width="4" stroke-dasharray="3 2.500"/>${poly("-39,-37 26,-47 39,35 -26,47", "#2c79cf")}${poly("-33,2 33,-4 39,35 -26,47", "#78b3e8")}
  <path d="M-31-36C-22-31-14-18-9-4L-3-7 4-3C2 0 1 4 1 8 10 12 20 17 25 27 14 27 5 23-2 16L-10 27-22 19-13 8C-25-4-32-20-31-36z" fill="#6e4b2c"/><path d="M-28-30C-22-20-16-8-9 3L-11 14C-20 4-26-10-28-30zM-14 12L-5 14-11 25-19 19z" fill="#c9ab7c"/><circle cx="28" cy="30" r="19" fill="none" stroke="#5d7fa8" stroke-width="2"/><circle cx="28" cy="30" r="12" fill="#4d78ad" opacity=".5"/>`;
const contacts = svg`${poly("22,-46 34,-48 38,-26 26,-24", "#d9dcdf")}${poly("26,-24 38,-26 41,-6 28,-4", "#62bfe6")}${poly("28,-4 42,-6 44,13 30,15", "#4cc76a")}${poly("30,15 44,13 47,30 32,38", "#eb9c22")}<path d="M-46-42Q-46-45-43-46L20-57Q24-57 25-53L42 38Q42 42 39 43L-31 54Z" fill="#b1803f"/><path d="M-46-42L-31 54" stroke="#80562a" stroke-width="4"/><circle cx="0" cy="-9" r="25" fill="none" stroke="#8a602f" stroke-width="2"/><ellipse cx="-1" cy="-15" rx="9" ry="14" fill="#8f6534"/><path d="M-14 12Q0-10 18 6 12 15 2 16-8 16-14 12z" fill="#8f6534"/>`;
const calendar = svg`${poly("-49,-33 36,-46 50,36 -36,51", "#596874")}${poly("-45,-36 31,-50 44,32 -35,46", "#f7f7f7")}${poly("-45,-36 31,-50 34,-29 -42,-15", "#e4504e")}${poly("-36,38 43,24 44,32 -35,46", "#b9bcc0")}
  <text transform="translate(-5 -25) rotate(-10)" font-size="19" text-anchor="middle" fill="#fff">DEC</text><text transform="translate(2 25) rotate(-8)" font-size="50" text-anchor="middle" font-weight="300" fill="#222">3</text>`;
const notes = svg`${poly("-47,-42 31,-55 46,41 -32,54", "#fbfbf8")}${poly("-47,-42 31,-55 33,-38 -44,-25", "#f9cf3b")}${range(8).map((i) => svg`<path d="M${-42 + i * 1.3} ${-14 + i * 8}L${34 + i * 1.3} ${-27 + i * 8}" stroke="#c9cacb" stroke-width="1.500"/>`)}<path d="M-44-22L33-35" stroke="#a08a4b" stroke-width="1.500" stroke-dasharray="2 2"/>`;
const reminders = svg`<path d="M-40-42L30-52 44 42-32 54z" fill="#15181b"/><path d="M-42-38Q-43-43-39-44L26-53Q30-54 31-49L44 36Q44 40 40 41L-28 50Q-32 51-33 46z" fill="#f7f7f7"/>${["#3c82f6", "#e2473f", "#ee9d3c", "#4c5560"].map((c, i) => svg`<circle cx=${-30 + i * 3} cy=${-25.5 + i * 18.3} r="6.500" fill=${c}/><path d="M${-18 + i * 3} ${-28 + i * 18.3}l42-7" stroke="#a5a7a9" stroke-width="1.800"/>`)}`;
const maps = svg`${poly("-54,-35 31,-47 43,36 -41,49", "#fafafa")}${poly("-49,-31 28,-42 39,32 -37,44", "#ece9e2")}${poly("0,-38 28,-42 34,0 18,-2", "#93d678")}${poly("-14,5 20,-4 24,18 0,30", "#8fd173")}${poly("-49,-16 -12,10 4,38 -6,40 -44,8", "#f7c23f")}${poly("-34,-33 -24,-35 -14,6 -22,8", "#3e86d6")}${poly("-43,10 -30,20 -26,43 -37,44", "#f5b9c6")}<circle cx="-23" cy="10" r="13" fill="#1f78d8"/>${poly("-23,0 -17,18 -23,13 -29,18", "#fff")}<circle cx="28" cy="21" r="25" fill="#eef1f3"/><circle cx="28" cy="21" r="15.500" fill="none" stroke="#5c8aa5" stroke-width="2.500"/>${poly("28,-3 31,4 25,4", "#e02a2a")}<text x="28" y="26.500" font-size="14.500" text-anchor="middle" fill="#222">3D</text>`;
const photos = svg`<circle r="52" fill="#f0efee"/>${["#f79a32", "#f2e232", "#aed257", "#6dc08b", "#6bb0e0", "#9a86c9", "#cf7fb0", "#f0605a"].map((c, i) => svg`<rect class="petal" x="-13" y="-44" width="26" height="42" rx="13" fill=${c} opacity=".88" transform="rotate(${i * 45})"/>`)}`;
const messages = svg`<path d="M0-47c30 0 51 18 51 42S30 37 0 37c-5 0-10 0-15-2-5 5-12 9-18 9 4-4 6-9 5-15C-43 22-51 10-51-5-51-29-30-47 0-47z" fill="url(#msg)"/><path d="M19-6c18 0 30 11 30 26 0 9-4 16-10 20 0 4 1 6 3 9-5 0-9-2-12-5-3 1-7 1-11 1-18 0-30-11-30-25S1-6 19-6z" fill="#eef5fc"/>${[4, 19, 34].map((x) => svg`<circle cx=${x} cy="20" r="5" fill="#14559f"/>`)}`;
const facetime = svg`<rect x="-51" y="-44" width="92" height="82" rx="11" fill="url(#ft)"/><rect x="-37" y="-23" width="45" height="40" rx="9" fill="#f3f6f3"/><path d="M11-8l17-13v34L11 6z" fill="#f3f6f3"/><circle cx="27" cy="19" r="26" fill="#eaf0e8"/><path d="M16 5c-3 3-3 10 5 20s16 10 19 7l1-5-6-4-5 3c-4-2-6-6-8-10l3-4-4-8z" fill="#2fcb46"/>`;
const music = svg`<circle r="51" fill="#c9ccd2"/><circle cy="-2" r="49" fill="#eff0f3"/><path d="M-12-26L23-34V16a9 8 0 1 1-5-7V-17L-7-11V23a9 8 0 1 1-5-7z" fill="url(#mus)"/>`;
const podcasts = svg`<circle r="51" fill="#6e28a8"/><circle cy="-2" r="49" fill="url(#pod)"/><g fill="none" stroke="#f6eefb" stroke-width="4.500"><path d="M-12 27A30 30 0 1 1 12 27"/><path d="M-11 13A18.500 18.500 0 1 1 11 13"/></g><circle cy="-3" r="7" fill="#f6eefb"/><path d="M-7 12q0-4 7-4t7 4L4 35q-1 4-4 4t-4-4z" fill="#f6eefb"/>`;
const chrome = svg`<circle r="54" fill="#fdc94a"/><path d="M-46.800-27A54 54 0 0 1 46.800-27L0-26-23 14z" fill="#db4b40"/><path d="M-46.800-27A54 54 0 0 0 0 54L23 13-23 14z" fill="#27a15f"/><path d="M0-25H47A54 54 0 0 1 0 54L22 13z" fill="#fdc94a"/><circle r="24.500" fill="#f4f4f4"/><circle r="19.500" fill="#4b8af4"/>`;
const prefs = svg`<rect x="-51" y="-47" width="102" height="95" rx="6" fill="url(#pref)"/><circle r="41" fill="#2b2d2f"/><circle r="33" fill="none" stroke="#b9b8b4" stroke-width="6"/><circle r="37.500" fill="none" stroke="#b9b8b4" stroke-width="4" stroke-dasharray="4 3.500"/><path d="M0 0h32M0 0l-17-28M0 0l-17 28" stroke="#b9b8b4" stroke-width="7"/><circle r="7" fill="#b9b8b4"/>${badge("1")}`;
const appstore = svg`<circle r="51" fill="#1554d6"/><circle cy="-1.500" r="49" fill="url(#store)"/><g stroke="#f1f5fb" stroke-width="8.500" stroke-linecap="round"><path d="M5-28L-14 7M-2-28L23 22M-28 8H7M20 8h8M-22 17l-2 4"/></g>${badge("3")}`;
const terminal = svg`<rect x="-51" y="-45" width="102" height="90" rx="6" fill="#b7c1c6"/><rect x="-49" y="-43" width="98" height="86" rx="5" fill="#0b0b0b"/><rect x="-43" y="-38" width="86" height="75" fill="#262626"/><path d="M-37-29l12 7-12 7M-22-14h14" fill="none" stroke="#fff" stroke-width="3.500"/>`;
const bluejeans = svg`<rect x="-59" y="-45" width="90" height="90" rx="3" fill="url(#bj)"/><path d="M31-22L-22 24-53 45H28q3 0 3-3z" fill="#62b0e8" opacity=".7"/><path d="M36-24L59-44V44L36 24z" fill="#1589db"/><text x="-14" y="31" font-size="88" font-weight="700" text-anchor="middle" fill="#fff" font-family="Liberation Sans, sans-serif">B</text>`;
const textedit = svg`${poly("-45,-43 31,-55 46,41 -31,53", "#f8f8f6")}${range(9).map((i) => svg`<path d="M${-43 + i * 1.4} ${-29 + i * 9}L${33 + i * 1.4} ${-41 + i * 9}" stroke="#b5bac2" stroke-width="1.500"/>`)}<path d="M-36-44L-21 52" stroke="#ecaaaa"/><path d="M40-52L20 28" stroke="#8b98a6" stroke-width="7" stroke-linecap="round"/><path d="M39-50L20 26" stroke="#d4dde6" stroke-width="3"/>${poly("16,27 24,29 11,50", "#6f6256")}`;
const preview = svg`<rect x="-41" y="-45" width="87" height="76" fill="#f4f1ea"/><rect x="-38" y="-42" width="81" height="70" fill="#a67c43"/>${poly("-55,-26 31,-39 43,34 -44,44", "#f7f7f7")}${poly("-50,-22 27,-34 32,0 -46,6", "#7db1ee")}${poly("-47,2 32,-6 36,30 -41,38", "#2f5f9c")}${poly("-44,22 -20,8 0,20 34,10 36,30 -41,38", "#cfdde8")}${poly("-42,32 -20,22 0,33 -41,38", "#806a52")}<path d="M12 14h40v27q-4 8-20 8t-18-8z" fill="#8a7760"/><circle cx="31" cy="12" r="21.500" fill="#d5d8da"/><circle cx="31" cy="12" r="19.500" fill="#33373a"/><circle cx="31" cy="12" r="16" fill="#b9cbdb"/><path d="M16 14q15-6 30 0a15 15 0 0 1-30 0z" fill="#75634f"/>`;
const csv = svg`<g transform="translate(-1)"><rect x="-43" y="-50" width="87" height="87" fill="#e3e3e3"/><path d="M-38-55h77V54h-77z" fill="#fdfdfd"/><path d="M-32-45H0Q12-44 14-22 34-22 39-6V54h-71z" fill="#f4f4f4"/><path d="M0-45Q12-44 13-22 32-20 39-4 36-38 0-45z" fill="#dcdcdc"/><path d="M-31-37H12M-31-33H12" stroke="#777" stroke-width="1.500"/><text y="48" font-size="11.500" font-weight="600" text-anchor="middle" fill="#777">CSV</text></g>`;
const trash = svg`<path d="M-38-40l12-12 8 2 10-4 8 5 8-5 10 6 10 2 8 8-8 10h-56z" fill="#e8e8e6"/><path d="M-24-48l10 6-6 8M2-52l6 12 10-8M16-46l10 6" fill="none" stroke="#5c6064" stroke-width="3"/><path d="M-12-42l8-4 5 6-7 4z" fill="#37a7c9"/><path d="M8-40l6 2-3 5z" fill="#c6492f"/><path d="M-42-44Q-40-32 0-31 40-32 42-44L32 42Q28 52 0 52T-30 42z" fill="url(#can)"/><path d="M-42-44Q-38-32 0-31T42-44" fill="none" stroke="#9a9da0" stroke-width="2"/>`;

const grad = (id: string, a: string, b: string) =>
  svg`<linearGradient id=${id} x1="0" y1="0" x2="0" y2="1"><stop offset="0" stop-color=${a}/><stop offset="1" stop-color=${b}/></linearGradient>`;

const DEFS: Record<string, SVGTemplateResult> = {
  finder: grad("finder", "#2fd0fb", "#2470ee"), launch: grad("launch", "#c9d8dd", "#7e7d7b"),
  safari: svg`<radialGradient id="safari"><stop offset="0" stop-color="#2bc4d8"/><stop offset="1" stop-color="#1b74ea"/></radialGradient>`,
  msg: grad("msg", "#5cc3f8", "#1c80fa"), ft: grad("ft", "#48ef78", "#23cc35"), mus: grad("mus", "#fb5468", "#5b8df7"),
  pod: grad("pod", "#cc6df2", "#8a38c8"), pref: grad("pref", "#cfdfe6", "#7d7b79"), store: grad("store", "#25c0fb", "#1f5ff0"),
  bj: grad("bj", "#1fc3dd", "#1b86d8"), can: svg`<linearGradient id="can"><stop offset="0" stop-color="#5b5f63"/><stop offset=".35" stop-color="#8d9194"/><stop offset=".7" stop-color="#6c7074"/><stop offset="1" stop-color="#9a9d9f"/></linearGradient>`,
};

type Tile = { art: SVGTemplateResult; def?: string; running?: boolean };
const APPS: Tile[] = [
  { art: finder, def: "finder", running: true }, { art: siri }, { art: rocket, def: "launch" }, { art: safari, def: "safari" },
  { art: mail }, { art: contacts }, { art: calendar }, { art: notes }, { art: reminders }, { art: maps }, { art: photos },
  { art: messages, def: "msg" }, { art: facetime, def: "ft" }, { art: music, def: "mus" }, { art: podcasts, def: "pod" },
  { art: chrome, running: true }, { art: prefs, def: "pref" }, { art: appstore, def: "store" }, { art: terminal, running: true },
];
const RECENT: Tile[] = [{ art: bluejeans, def: "bj" }, { art: textedit }, { art: preview }];
const FILES: Tile[] = [{ art: csv }, { art: trash, def: "can" }];

@customElement("app-dock")
class AppDock extends LitElement {
  static styles = css`
    :host { display: block; }
    .dock { display: flex; box-sizing: border-box; width: 3148px; height: 150px; padding-left: 6px; border: 2px solid #3a3f4b; border-bottom: 0; border-radius: 10px 10px 0 0; background: linear-gradient(#171b28, #152030); font-family: Inter, sans-serif; }
    .tile { flex: none; display: block; width: 125.800px; height: 148px; }
    .petal { mix-blend-mode: multiply; }
    .sep { flex: none; width: 2px; height: 110px; margin: 18px 27px 0 28px; background: #4d5562; }
  `;
  private tile(t: Tile) {
    return html`<svg class="tile" viewBox="-62.900 -69 125.800 148" fill="none">${t.def ? svg`<defs>${DEFS[t.def]}</defs>` : nothing}${t.art}${t.running ? svg`<circle cy="71" r="4" fill="#9aa1ab"/>` : nothing}</svg>`;
  }
  render() {
    return html`<div class="dock">${APPS.map((t) => this.tile(t))}<i class="sep"></i>${RECENT.map((t) => this.tile(t))}<i class="sep"></i>${FILES.map((t) => this.tile(t))}</div>`;
  }
}

@customElement("app-root")
class AppRoot extends LitElement {
  static styles = css`
    :host { display: block; position: relative; width: 3360px; height: 2100px; overflow: hidden; background: linear-gradient(100deg, #040911, #030509 30%, #04070d 80%, #07182a); }
    .window { box-sizing: border-box; height: 1898px; margin: 0 2px; border: 2px solid #626668; border-radius: 12px; overflow: hidden; }
    .dock { display: block; margin: 6px 0 0 106px; }
    .dialog { position: absolute; left: 970px; top: 694px; }
  `;
  render() {
    return html`
      <menu-bar></menu-bar>
      <div class="window"><browser-chrome></browser-chrome><aws-console></aws-console></div>
      <app-dock class="dock"></app-dock>
      <permissions-dialog class="dialog"></permissions-dialog>`;
  }
}
